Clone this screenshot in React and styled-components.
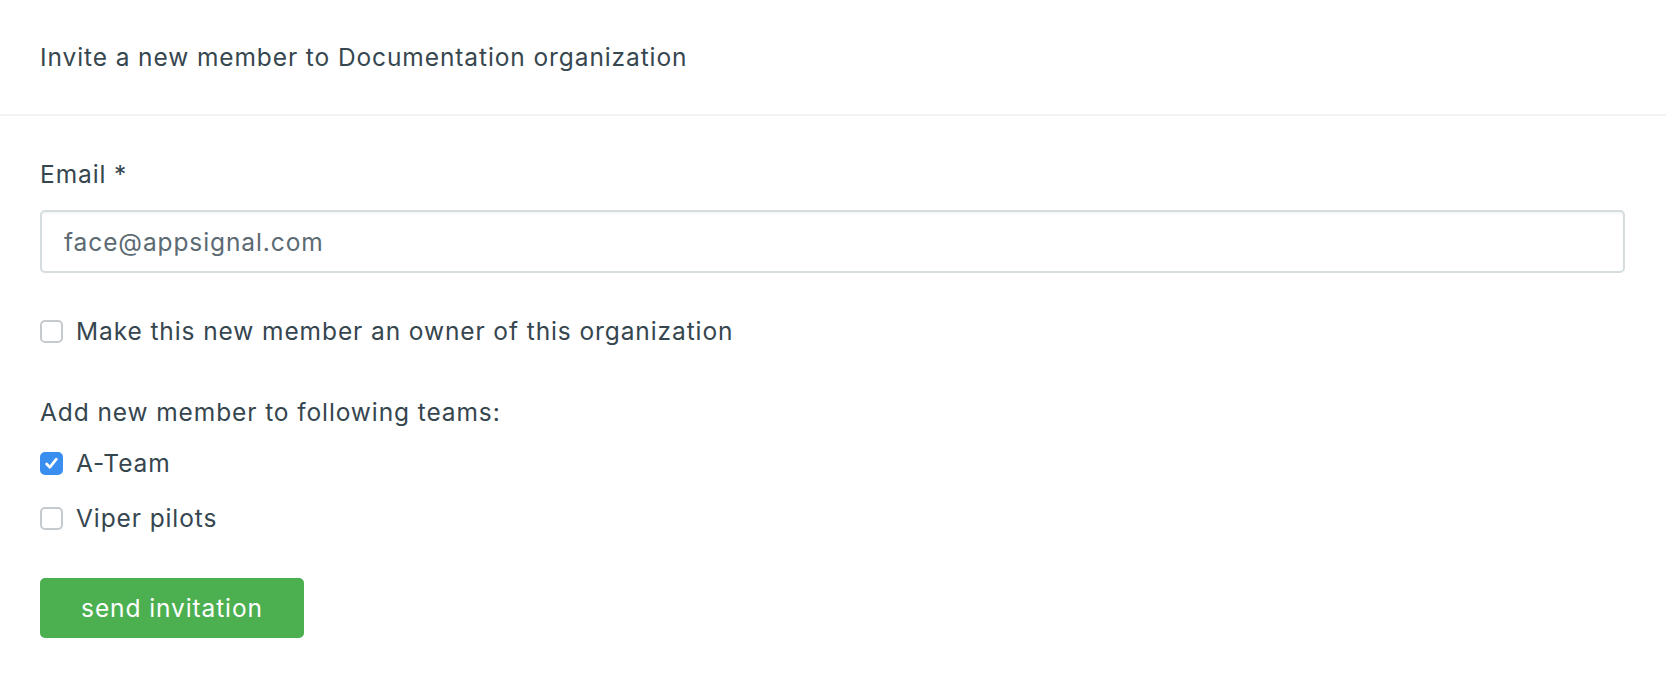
import React, { useState } from "react";
import styled, { createGlobalStyle } from "styled-components";

const GlobalStyle = createGlobalStyle`
  body {
    margin: 0;
    background: #ffffff;
    font-family: Inter, "Open Sans", "Liberation Sans", sans-serif;
    color: #36464f;
    letter-spacing: 0.9px;
  }
`;

const StyledPanel = styled.div`
  display: flex;
  flex-direction: column;
  width: 100%;
  min-height: 678px;
`;

const StyledHeader = styled.header`
  display: flex;
  align-items: center;
  height: 116px;
  box-sizing: border-box;
  padding: 0 40px;
  border-bottom: 2px solid #f2f2f2;
  font-size: 24.5px;
  color: #37474f;
`;

const StyledForm = styled.form`
  display: flex;
  flex-direction: column;
  padding: 42px 41px 40px 40px;
`;

const StyledLabel = styled.label`
  display: block;
  font-size: 24.5px;
  line-height: 32px;
  color: #36464f;
  margin-top: ${({ $top }) => $top || 0}px;
  margin-bottom: ${({ $gap }) => $gap || 0}px;
`;

const StyledInput = styled.input`
  box-sizing: border-box;
  width: 100%;
  height: 63px;
  padding: 0 22px;
  border: 2px solid #d6dde1;
  border-radius: 5px;
  box-shadow: inset 0 2px 2px rgba(0, 0, 0, 0.04);
  font-family: inherit;
  font-size: 24.5px;
  letter-spacing: 0.9px;
  color: #5c6b73;
  outline: none;
`;

const StyledCheckRow = styled.label`
  display: flex;
  align-items: center;
  gap: 13px;
  height: 32px;
  font-size: 24.5px;
  color: #36464f;
  cursor: pointer;
  margin-top: ${({ $top }) => $top || 0}px;
`;

const StyledBox = styled.span`
  display: flex;
  align-items: center;
  justify-content: center;
  width: 23px;
  height: 23px;
  box-sizing: border-box;
  border-radius: 5px;
  border: 2px solid ${({ $checked }) => ($checked ? "#3a8ef0" : "#c4cace")};
  background: ${({ $checked }) => ($checked ? "#3a8ef0" : "#ffffff")};
  flex-shrink: 0;
`;

const StyledButton = styled.button`
  align-self: flex-start;
  width: 264px;
  height: 60px;
  margin-top: 44px;
  border: none;
  border-radius: 5px;
  background: #4caf50;
  color: #ffffff;
  font-family: inherit;
  font-size: 24.5px;
  letter-spacing: 0.9px;
  cursor: pointer;
`;

const CheckBox = ({ checked, label, top, onToggle }) => (
  <StyledCheckRow $top={top} onClick={onToggle}>
    <StyledBox $checked={checked}>
      {checked && (
        <svg width="15" height="15" viewBox="0 0 14 14">
          <path
            d="M2.5 7.5 L5.5 10.5 L11.5 3"
            fill="none"
            stroke="#ffffff"
            strokeWidth="2.6"
            strokeLinecap="round"
            strokeLinejoin="round"
          />
        </svg>
      )}
    </StyledBox>
    {label}
  </StyledCheckRow>
);

const App = () => {
  const [owner, setOwner] = useState(false);
  const [teams, setTeams] = useState({ ateam: true, viper: false });

  const toggleTeam = (key) => setTeams({ ...teams, [key]: !teams[key] });

  return (
    <StyledPanel>
      <GlobalStyle />
      <StyledHeader>Invite a new member to Documentation organization</StyledHeader>
      <StyledForm onSubmit={(e) => e.preventDefault()}>
        <StyledLabel $gap={20}>Email *</StyledLabel>
        <StyledInput defaultValue="face@appsignal.com" />

        <CheckBox
          top={42}
          checked={owner}
          label="Make this new member an owner of this organization"
          onToggle={() => setOwner(!owner)}
        />

        <StyledLabel $top={49}>Add new member to following teams:</StyledLabel>
        <CheckBox
          top={19}
          checked={teams.ateam}
          label="A-Team"
          onToggle={() => toggleTeam("ateam")}
        />
        <CheckBox
          top={23}
          checked={teams.viper}
          label="Viper pilots"
          onToggle={() => toggleTeam("viper")}
        />

        <StyledButton type="submit">send invitation</StyledButton>
      </StyledForm>
    </StyledPanel>
  );
};

export default App;
